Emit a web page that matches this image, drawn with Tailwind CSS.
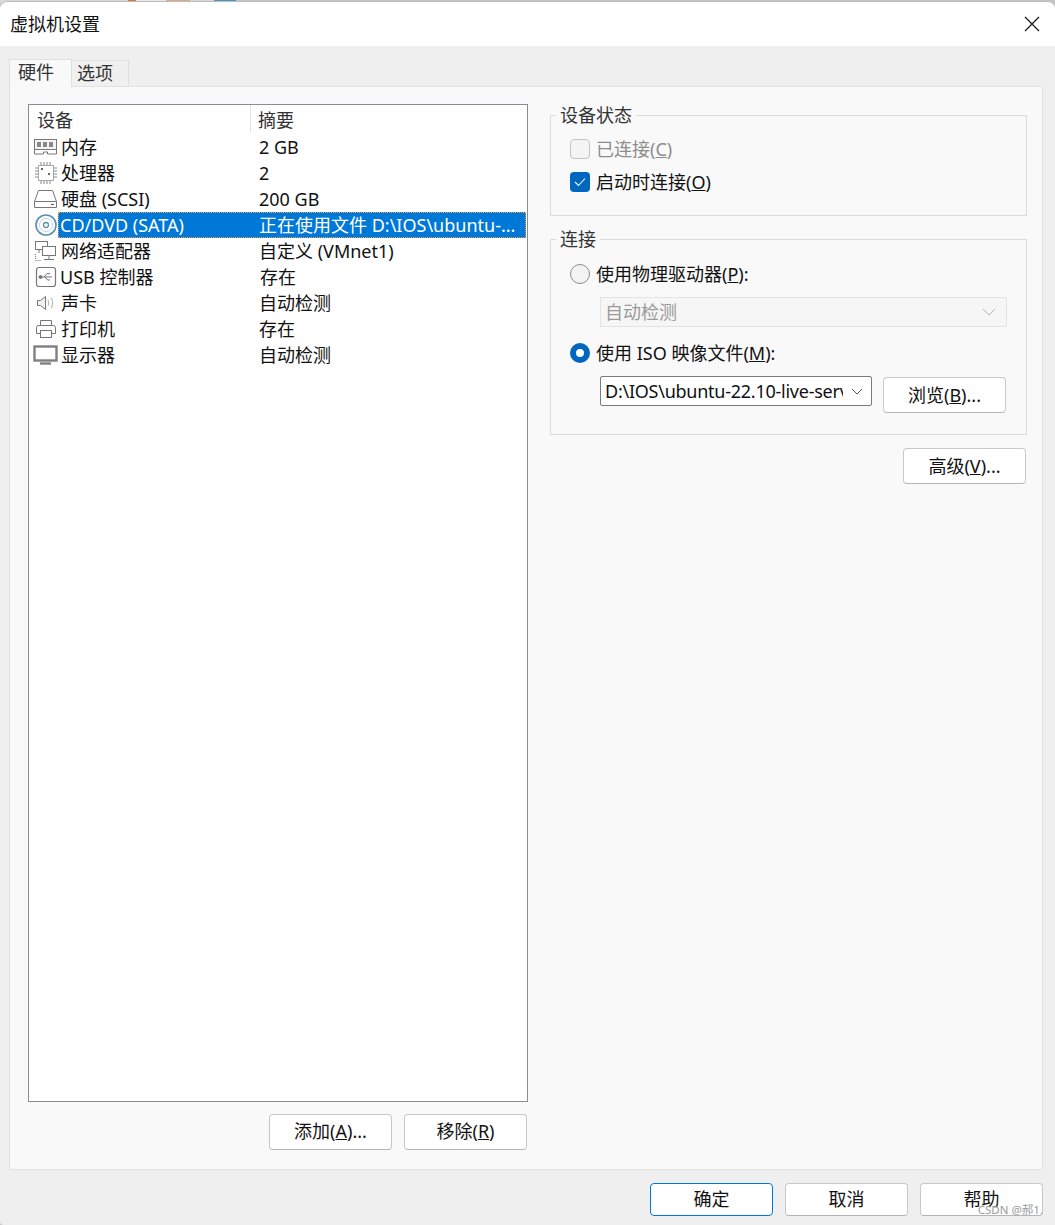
<!DOCTYPE html>
<html lang="zh-CN">
<head>
    <meta charset="UTF-8">
    <title>虚拟机设置</title>
    <script src="https://cdn.jsdelivr.net/npm/@tailwindcss/browser@4"></script>
</head>
<body class="bg-[#8a8a8a]">
    <div class="w-[1055px] h-[1225px] relative overflow-hidden flex flex-col bg-[#c9c9c9] font-['Noto_Sans','Noto_Sans_CJK_SC',sans-serif] text-[18px] leading-[24px] text-[#111]">
        <!-- desktop behind the window -->
        <div class="h-[3px] shrink-0 flex bg-[#c4c4c4]">
            <div class="w-[128px] bg-[#d8d8d8]"></div>
            <div class="w-[8px] bg-[#d9743c]"></div>
            <div class="w-[30px] bg-[#e8e8e8]"></div>
            <div class="w-[24px] bg-[#e0a98c]"></div>
            <div class="w-[24px] bg-[#d8d8d8]"></div>
            <div class="w-[22px] bg-[#4a94c4]"></div>
        </div>

        <div class="flex-1 flex flex-col bg-[#efefef] rounded-t-[8px] rounded-bl-[4px] -mt-[2px] border-t border-[#bdbdbd] overflow-hidden">
            <!-- title bar -->
            <div class="h-[44px] shrink-0 bg-white flex items-center justify-between pl-[10px] pr-[14px]">
                <span>虚拟机设置</span>
                <svg width="18" height="18" viewBox="0 0 18 18" fill="none" stroke="#1a1a1a" stroke-width="1.3"><path d="M2 2l14 14M16 2L2 16"/></svg>
            </div>

            <!-- tabs -->
            <div class="h-[40px] shrink-0 pt-[12px] pl-[9px] flex items-end">
                <div class="w-[63px] h-[28px] bg-[#f9f9f9] border border-b-0 border-[#dfdfdf] pl-[8px] relative z-10 -mb-[1px] text-[#333]">硬件</div>
                <div class="w-[57px] h-[26px] bg-[#f0f0f0] border border-l-0 border-b-0 border-[#dfdfdf] pl-[5px] text-[#333]">选项</div>
            </div>

            <!-- hardware tab -->
            <div class="flex-1 ml-[9px] mr-[12px] bg-[#f9f9f9] border border-[#e2e2e2] pt-[17px] pl-[18px] pr-[15px] pb-[19px] flex gap-[22px]">
                <div class="w-[500px] flex flex-col">
                    <div class="flex-1 bg-white border border-[#8b8b96] flex flex-col">
                        <div class="h-[29px] flex items-start text-[#333]">
                            <div class="w-[222px] h-[28px] pl-[8px] pt-[3px] border-r border-[#e3e3e3]">设备</div>
                            <div class="pl-[7px] pt-[3px] h-[28px]">摘要</div>
                        </div>

                        <div class="h-[26px] flex items-center">
                            <div class="w-[29px] flex justify-center pl-[4px]">
                                <svg width="25" height="18" viewBox="0 0 25 18" fill="none" stroke="#777"><rect x="1.500" y="1.500" width="22" height="10" fill="#f4f4f4"/><rect x="4" y="4" width="4" height="5" fill="#888" stroke="none"/><rect x="10" y="4" width="4" height="5" fill="#888" stroke="none"/><rect x="16" y="4" width="4" height="5" fill="#888" stroke="none"/><path d="M1.500 11.500v4.500h9v-2h4v2h9v-4.500"/></svg>
                            </div>
                            <div class="w-[200px] pl-[3px]">内存</div>
                            <div class="pl-[1px]">2 GB</div>
                        </div>
                        <div class="h-[26px] flex items-center">
                            <div class="w-[29px] flex justify-center pl-[4px]">
                                <svg width="24" height="24" viewBox="0 0 24 24" fill="none"><rect x="4.500" y="4.500" width="15" height="15" fill="#fff" stroke="#aaa"/><rect x="7" y="7" width="2" height="2" fill="#666"/><rect x="14" y="12" width="2" height="2" fill="#666"/><path d="M7 1v3M10 1v3M13 1v3M16 1v3M7 20v3M10 20v3M13 20v3M16 20v3M1 7h3M1 10h3M1 13h3M1 16h3M20 7h3M20 10h3M20 13h3M20 16h3" stroke="#888"/></svg>
                            </div>
                            <div class="w-[200px] pl-[3px]">处理器</div>
                            <div class="pl-[1px]">2</div>
                        </div>
                        <div class="h-[26px] flex items-center">
                            <div class="w-[29px] flex justify-center pl-[4px]">
                                <svg width="25" height="20" viewBox="0 0 25 20" fill="none" stroke="#777"><path d="M5.500 1.500h14l4 11v6h-22v-6zM1.500 12.500h22"/><path d="M18 15.500h3" stroke="#555"/></svg>
                            </div>
                            <div class="w-[200px] pl-[3px]">硬盘 (SCSI)</div>
                            <div class="pl-[1px]">200 GB</div>
                        </div>
                        <div class="h-[26px] flex items-center">
                            <div class="w-[29px] flex justify-center pl-[4px]">
                                <svg width="24" height="24" viewBox="0 0 24 24" fill="none"><circle cx="12" cy="12" r="10" stroke="#5b8fb0" stroke-width="1.600"/><circle cx="12" cy="12" r="6.500" stroke="#c3d5e0"/><circle cx="12" cy="12" r="2.500" stroke="#5b8fb0" stroke-width="1.300"/></svg>
                            </div>
                            <div class="flex-1 mr-[1px] h-[26px] flex items-center bg-[#0078d7] text-white border border-dotted border-[#e8a060]">
                                <div class="w-[199px] pl-[1px]">CD/DVD (SATA)</div>
                                <div class="pl-[1px] whitespace-nowrap">正在使用文件 D:\IOS\ubuntu-...</div>
                            </div>
                        </div>
                        <div class="h-[26px] flex items-center">
                            <div class="w-[29px] flex justify-center pl-[4px]">
                                <svg width="24" height="22" viewBox="0 0 24 22" fill="none" stroke="#777"><rect x="1.500" y="1.500" width="12" height="8"/><rect x="8.500" y="6.500" width="13" height="9" fill="#fff"/><path d="M15 16v3M10 19.500h10M5 10v3" /><path d="M1.500 20.500h6M1.500 14v6" stroke-dasharray="1 1"/></svg>
                            </div>
                            <div class="w-[200px] pl-[3px]">网络适配器</div>
                            <div class="pl-[1px]">自定义 (VMnet1)</div>
                        </div>
                        <div class="h-[26px] flex items-center">
                            <div class="w-[29px] flex justify-center pl-[4px]">
                                <svg width="22" height="22" viewBox="0 0 22 22" fill="none" stroke="#777"><rect x="1.500" y="1.500" width="19" height="19" rx="2.500" stroke-width="1.200"/><path d="M5 11h12M9 11l3-3.500h3M10 11l2.500 3H15"/><circle cx="5.500" cy="11" r="1.500" fill="#777"/></svg>
                            </div>
                            <div class="w-[200px] pl-[2px]">USB 控制器</div>
                            <div class="pl-[2px]">存在</div>
                        </div>
                        <div class="h-[26px] flex items-center">
                            <div class="w-[29px] flex justify-center pl-[4px]">
                                <svg width="20" height="18" viewBox="0 0 20 18" fill="none" stroke="#777"><path d="M1.500 6.500h3l5-4v13l-5-4h-3z" fill="#f2f2f2"/><path d="M12 6c1 1.700 1 4.300 0 6M15 3.500c2 3 2 8 0 11" stroke="#aaa"/></svg>
                            </div>
                            <div class="w-[200px] pl-[3px]">声卡</div>
                            <div class="pl-[1px]">自动检测</div>
                        </div>
                        <div class="h-[26px] flex items-center">
                            <div class="w-[29px] flex justify-center pl-[4px]">
                                <svg width="22" height="20" viewBox="0 0 22 20" fill="none" stroke="#777"><path d="M5.500 6V1.500h11V6"/><path d="M5 14.500H1.500v-6a2 2 0 0 1 2-2h15a2 2 0 0 1 2 2v6H17"/><rect x="5.500" y="11.500" width="11" height="7"/></svg>
                            </div>
                            <div class="w-[200px] pl-[3px]">打印机</div>
                            <div class="pl-[1px]">存在</div>
                        </div>
                        <div class="h-[26px] flex items-center">
                            <div class="w-[29px] flex justify-center pl-[4px]">
                                <svg width="25" height="20" viewBox="0 0 25 20" fill="none" stroke="#808080"><rect x="1.500" y="1.500" width="22" height="14" stroke-width="2.400"/><path d="M7 18.500h11" stroke-width="2.400"/></svg>
                            </div>
                            <div class="w-[200px] pl-[3px]">显示器</div>
                            <div class="pl-[1px]">自动检测</div>
                        </div>
                    </div>

                    <div class="h-[48px] shrink-0 flex items-end justify-end gap-[12px] pr-[1px]">
                        <button class="w-[123px] h-[36px] pb-[2px] bg-white border border-[#c8c8c8] border-b-[#b5b5b5] rounded-[4px]">添加(<u>A</u>)...</button>
                        <button class="w-[123px] h-[36px] pb-[2px] bg-white border border-[#c8c8c8] border-b-[#b5b5b5] rounded-[4px]">移除(<u>R</u>)</button>
                    </div>
                </div>

                <div class="flex-1 flex flex-col">
                    <fieldset class="h-[113px] border border-[#dcdcdc] -mt-[1px] pl-[19px]">
                        <legend class="-ml-[14px] px-[4px] text-[#333]">设备状态</legend>
                        <div class="h-[33px] mt-[5px] flex items-center gap-[6px] text-[#8c8c8c]">
                            <span class="w-[20px] h-[20px] rounded-[4px] border border-[#c4c4c4] bg-[#f4f4f4]"></span>
                            <span>已连接(<u>C</u>)</span>
                        </div>
                        <div class="h-[33px] flex items-center gap-[6px]">
                            <span class="w-[20px] h-[20px] rounded-[4px] bg-[#0067c0] flex items-center justify-center">
                                <svg width="12" height="10" viewBox="0 0 12 10" fill="none" stroke="#fff" stroke-width="1.100"><path d="M1 5l3.500 3.500L11 1.500"/></svg>
                            </span>
                            <span>启动时连接(<u>O</u>)</span>
                        </div>
                    </fieldset>

                    <fieldset class="h-[208px] mt-[11px] border border-[#dcdcdc] pl-[19px]">
                        <legend class="-ml-[14px] px-[4px] text-[#333]">连接</legend>
                        <div class="h-[24px] mt-[11px] flex items-center gap-[6px]">
                            <span class="w-[20px] h-[20px] rounded-full border border-[#8c8c8c] bg-[#f3f3f3]"></span>
                            <span>使用物理驱动器(<u>P</u>):</span>
                        </div>
                        <div class="w-[407px] h-[30px] mt-[11px] ml-[30px] border border-[#e3e3e3] bg-[#f6f6f6] pl-[4px] pr-[10px] flex items-center justify-between text-[#9a9a9a]">
                            <span>自动检测</span>
                            <svg width="14" height="8" viewBox="0 0 14 8" fill="none" stroke="#b5b5b5"><path d="M1 1l6 6 6-6"/></svg>
                        </div>
                        <div class="h-[24px] mt-[14px] flex items-center gap-[6px]">
                            <span class="w-[20px] h-[20px] rounded-full border-[6px] border-[#0067c0] bg-white"></span>
                            <span>使用 ISO 映像文件(<u>M</u>):</span>
                        </div>
                        <div class="mt-[11px] ml-[30px] flex items-start gap-[11px]">
                            <div class="w-[272px] h-[30px] border border-[#7a7a7a] rounded-[2px] bg-white pl-[4px] pr-[8px] flex items-center justify-between">
                                <span class="w-[238px] overflow-hidden whitespace-nowrap tracking-[-0.25px]">D:\IOS\ubuntu-22.10-live-serv</span>
                                <svg width="12" height="7" viewBox="0 0 12 7" fill="none" stroke="#555"><path d="M1 1l5 5 5-5"/></svg>
                            </div>
                            <button class="w-[123px] h-[36px] mt-[1px] bg-white border border-[#c8c8c8] border-b-[#b5b5b5] rounded-[4px]">浏览(<u>B</u>)...</button>
                        </div>
                    </fieldset>

                    <div class="mt-[13px] flex justify-end pr-[1px]">
                        <button class="w-[123px] h-[36px] bg-white border border-[#c8c8c8] border-b-[#b5b5b5] rounded-[4px]">高级(<u>V</u>)...</button>
                    </div>
                </div>
            </div>

            <!-- dialog buttons -->
            <div class="h-[55px] shrink-0 flex items-start justify-end gap-[12px] pt-[13px] pr-[12px]">
                <button class="w-[123px] h-[33px] pb-[2px] bg-white border border-[#0078d7] rounded-[4px]">确定</button>
                <button class="w-[123px] h-[33px] pb-[2px] bg-white border border-[#c8c8c8] border-b-[#b5b5b5] rounded-[4px]">取消</button>
                <button class="w-[123px] h-[33px] pb-[2px] bg-white border border-[#c8c8c8] border-b-[#b5b5b5] rounded-[4px]">帮助</button>
            </div>
        </div>

        <span class="absolute right-[12px] bottom-[8px] text-[11.5px] leading-[14px] text-[#9a9a9a]">CSDN @郝1.</span>
    </div>
</body>
</html>
